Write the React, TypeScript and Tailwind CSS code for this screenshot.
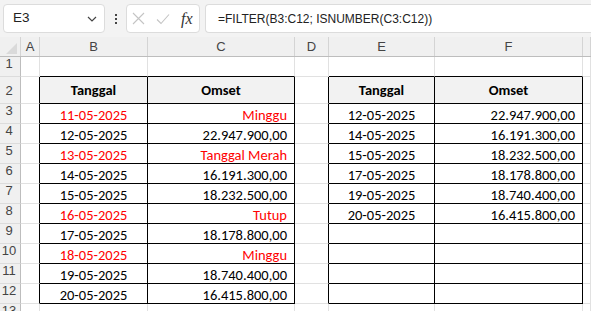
import React from "react";

type Cell = { t: string; red?: boolean; bold?: boolean; align: "c" | "r"; hdr?: boolean };
type ColKey = "A" | "B" | "C" | "D" | "E" | "F" | "G";

const COLS: { k: ColKey; w: string }[] = [
  { k: "A", w: "w-[19px]" },
  { k: "B", w: "w-[108px]" },
  { k: "C", w: "w-[147px]" },
  { k: "D", w: "w-[34px]" },
  { k: "E", w: "w-[106px]" },
  { k: "F", w: "w-[148px]" },
  { k: "G", w: "flex-1" },
];

const left: [string, string, boolean][] = [
  ["11-05-2025", "Minggu", true],
  ["12-05-2025", "22.947.900,00", false],
  ["13-05-2025", "Tanggal Merah", true],
  ["14-05-2025", "16.191.300,00", false],
  ["15-05-2025", "18.232.500,00", false],
  ["16-05-2025", "Tutup", true],
  ["17-05-2025", "18.178.800,00", false],
  ["18-05-2025", "Minggu", true],
  ["19-05-2025", "18.740.400,00", false],
  ["20-05-2025", "16.415.800,00", false],
];

const right: [string, string][] = [
  ["12-05-2025", "22.947.900,00"],
  ["14-05-2025", "16.191.300,00"],
  ["15-05-2025", "18.232.500,00"],
  ["17-05-2025", "18.178.800,00"],
  ["19-05-2025", "18.740.400,00"],
  ["20-05-2025", "16.415.800,00"],
];

function getCell(col: ColKey, row: number): Cell | null {
  if (row === 2) {
    if (col === "B" || col === "E") return { t: "Tanggal", bold: true, align: "c", hdr: true };
    if (col === "C" || col === "F") return { t: "Omset", bold: true, align: "c", hdr: true };
  }
  if (row >= 3 && row <= 12) {
    const i = row - 3;
    const l = left[i];
    if (col === "B") return { t: l[0], red: l[2], align: "c" };
    if (col === "C") return { t: l[1], red: l[2], align: "r" };
    const r = right[i];
    if (r) {
      if (col === "E") return { t: r[0], align: "c" };
      if (col === "F") return { t: r[1], align: "r" };
    }
  }
  return null;
}

const CELL_FONT = { fontFamily: '"Carlito", "Liberation Sans", Arial, sans-serif' };

function GridCell({ col, row, w }: { col: ColKey; row: number; w: string }) {
  const inTableCol = col === "B" || col === "C" || col === "E" || col === "F";
  const rightBlack = col !== "G" && row >= 2 && row <= 12;
  const bottomBlack = inTableCol && row >= 1 && row <= 12;
  const cell = getCell(col, row);
  const hdrBg = inTableCol && row === 2;
  return (
    <div
      className={[
        w,
        "h-full shrink-0 border-r border-b flex overflow-hidden whitespace-nowrap text-[14.5px] leading-none",
        rightBlack ? "border-r-black" : "border-r-[#e1e1e1]",
        bottomBlack ? "border-b-black" : "border-b-[#e1e1e1]",
        hdrBg ? "bg-[#f2f2f2] items-center pt-[1px]" : "bg-white items-end pb-[1px]",
        cell && cell.align === "r" ? "justify-end pr-[7px]" : "justify-center",
        cell && cell.red ? "text-[#ff0000]" : "text-black",
        cell && cell.bold ? "font-bold" : "font-normal",
      ].join(" ")}
      style={CELL_FONT}
    >
      {cell ? cell.t : ""}
    </div>
  );
}

const rows: { n: number; h: string }[] = [
  { n: 1, h: "h-[20px]" },
  { n: 2, h: "h-[27px]" },
  { n: 3, h: "h-[20px]" },
  { n: 4, h: "h-[20px]" },
  { n: 5, h: "h-[20px]" },
  { n: 6, h: "h-[20px]" },
  { n: 7, h: "h-[20px]" },
  { n: 8, h: "h-[20px]" },
  { n: 9, h: "h-[20px]" },
  { n: 10, h: "h-[20px]" },
  { n: 11, h: "h-[20px]" },
  { n: 12, h: "h-[20px]" },
  { n: 13, h: "h-[20px]" },
];

const UI_FONT = { fontFamily: '"Liberation Sans", Arial, sans-serif' };

export default function App() {
  return (
    <div className="w-[591px] h-[311px] overflow-hidden bg-white flex flex-col" style={UI_FONT}>
      {/* top bar */}
      <div className="h-[37px] shrink-0 bg-[#f3f3f3] flex items-start pt-[4px] pl-[3px]">
        <div className="w-[102px] h-[29px] bg-white border border-[#dcdcdc] rounded-[4px] flex items-center justify-between pl-[9px] pr-[7px]">
          <span className="text-[13.5px] text-[#222]">E3</span>
          <svg width="10" height="6" viewBox="0 0 10 6">
            <path d="M1 1 L5 5 L9 1" fill="none" stroke="#444" strokeWidth="1.2" />
          </svg>
        </div>
        <div className="w-[21px] h-[29px] flex flex-col items-center justify-center gap-[2px]">
          <div className="w-[2px] h-[2px] bg-[#444]" />
          <div className="w-[2px] h-[2px] bg-[#444]" />
          <div className="w-[2px] h-[2px] bg-[#444]" />
        </div>
        <div className="w-[74px] h-[29px] bg-white border border-[#dcdcdc] rounded-[4px] flex items-center pl-[5px] gap-[11px]">
          <svg width="13" height="13" viewBox="0 0 13 13">
            <path d="M1 1 L12 12 M12 1 L1 12" stroke="#c4c4c4" strokeWidth="1.1" />
          </svg>
          <svg width="14" height="12" viewBox="0 0 14 12">
            <path d="M1 6.5 L5 10.5 L13 1.5" fill="none" stroke="#c4c4c4" strokeWidth="1.1" />
          </svg>
          <span
            className="text-[16px] italic text-[#333] leading-none"
            style={{ fontFamily: '"Liberation Serif", "Times New Roman", serif' }}
          >
            fx
          </span>
        </div>
        <div className="ml-[5px] flex-1 h-[29px] bg-white border border-[#dcdcdc] border-r-0 rounded-l-[4px] flex items-center pl-[12px]">
          <span className="text-[12px] text-[#222] whitespace-nowrap">=FILTER(B3:C12; ISNUMBER(C3:C12))</span>
        </div>
      </div>

      {/* column header */}
      <div className="h-[20px] shrink-0 flex bg-[#f0f0f0] border-b border-b-[#bdbdbd]">
        <div className="w-[21px] shrink-0 h-full border-r border-r-[#d4d4d4] flex items-end justify-end pr-[3px] pb-[2px]">
          <svg width="11" height="11" viewBox="0 0 11 11">
            <path d="M11 0 L11 11 L0 11 Z" fill="#dadada" />
          </svg>
        </div>
        {COLS.map((c) => (
          <div
            key={c.k}
            className={[
              c.w,
              "shrink-0 h-full border-r border-r-[#d4d4d4] flex items-center justify-center text-[13px] text-[#444]",
            ].join(" ")}
          >
            {c.k === "G" ? "" : c.k}
          </div>
        ))}
      </div>

      {/* grid rows */}
      <div className="flex-1 flex flex-col overflow-hidden">
        {rows.map((r) => (
          <div key={r.n} className={[r.h, "shrink-0 flex"].join(" ")}>
            <div className="w-[21px] shrink-0 h-full bg-[#f0f0f0] border-r border-r-[#bdbdbd] border-b border-b-[#dcdcdc] flex items-end justify-center pb-[3px] text-[13px] text-[#444] pr-[2px]">
              {r.n}
            </div>
            {COLS.map((c) => (
              <GridCell key={c.k} col={c.k} row={r.n} w={c.w} />
            ))}
          </div>
        ))}
      </div>
    </div>
  );
}
